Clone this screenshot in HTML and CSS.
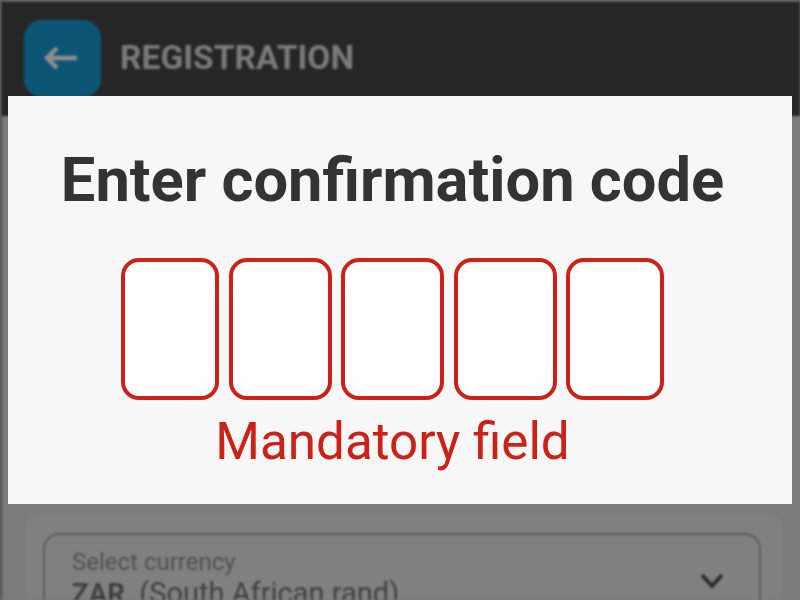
FILE: index.html
```html
<!DOCTYPE html>
<html lang="en">
<head>
<meta charset="utf-8">
<title>Registration</title>
<link rel="stylesheet" href="styles.css">
</head>
<body>
<div class="page">
  <div class="backdrop">
    <header class="topbar">
      <button class="back" aria-label="Back">
        <svg class="back-icon" viewBox="0 0 36 26" width="36" height="26"><path d="M14 3 4 13l10 10M4 13h30" fill="none" stroke="currentColor" stroke-width="4.4"/></svg>
      </button>
      <h1 class="title">REGISTRATION</h1>
    </header>
    <main class="content">
      <div class="card">
        <div class="select">
          <div class="select-text">
            <div class="select-label">Select currency</div>
            <div class="select-value"><b>ZAR</b>&nbsp; (South African rand)</div>
          </div>
          <svg class="chevron" viewBox="0 0 24 16" width="24" height="16"><path d="M2 2l10 11L22 2" fill="none" stroke="currentColor" stroke-width="3.6"/></svg>
        </div>
      </div>
    </main>
  </div>
  <section class="modal">
    <h2 class="modal-title">Enter confirmation code</h2>
    <div class="code">
      <div class="cell cell-narrow"></div>
      <div class="cell"></div>
      <div class="cell"></div>
      <div class="cell"></div>
      <div class="cell cell-narrow"></div>
    </div>
    <p class="error">Mandatory field</p>
  </section>
</div>
</body>
</html>
```
FILE: styles.css
```css
* { box-sizing: border-box; }
html, body { margin: 0; padding: 0; }
body { background: #7b7b7b; font-family: Roboto, "Liberation Sans", sans-serif; }
.page { position: relative; width: 800px; height: 600px; overflow: hidden; background: #7b7b7b; }
.backdrop { filter: blur(1px); height: 600px; overflow: hidden; }
.topbar { height: 116px; background: #262626; display: flex; align-items: flex-start; gap: 19px; border-top: 2px solid #5a5a5a; border-left: 2px solid #4a4a4a; padding: 18px 24px 0 22px; }
.back { width: 77px; height: 77px; border: 0; border-radius: 18px; background: #0c5575; color: #8f8f8f; display: flex; align-items: center; justify-content: center; padding: 0 3px 2px 0; }
.title { margin: 18px 0 0; font-size: 33.6px; line-height: 40px; font-weight: 700; color: #7a7a7a; white-space: nowrap; }
.content { border-left: 2px solid #4a4a4a; padding: 397px 17px 0 23px; height: 484px; }
.card { background: #808080; border-radius: 16px 16px 0 0; padding: 20px 22px 0 18px; height: 100px; }
.select { border: 2px solid #5c5c5c; border-radius: 16px; height: 90px; padding: 13px 35px 0 27px; display: flex; justify-content: space-between; align-items: flex-start; }
.select-label { font-size: 24px; line-height: 28px; color: #505050; }
.select-value { font-size: 29px; line-height: 34px; color: #404040; white-space: nowrap; }
.select-value b { font-size: 27.5px; font-weight: 700; }
.chevron { color: #2a2a2a; margin-top: 25px; }
.modal { position: absolute; left: 8px; top: 96px; width: 784px; height: 408px; background: #f7f7f7; display: flex; flex-direction: column; align-items: center; padding-right: 15px; }
.modal-title { margin: 46px 0 0; font-size: 61.4px; line-height: 76px; font-weight: 700; color: #333333; white-space: nowrap; filter: blur(0.4px); }
.code { display: flex; gap: 9.5px; margin-top: 40px; filter: blur(0.3px); }
.cell { width: 103px; height: 142px; background: #fff; border: 4px solid #cc2116; border-radius: 18px; }
.cell-narrow { width: 98px; }
.error { margin: 6px 0 0; font-size: 51.2px; line-height: 72px; color: #cc2116; white-space: nowrap; filter: blur(0.4px); }
```
